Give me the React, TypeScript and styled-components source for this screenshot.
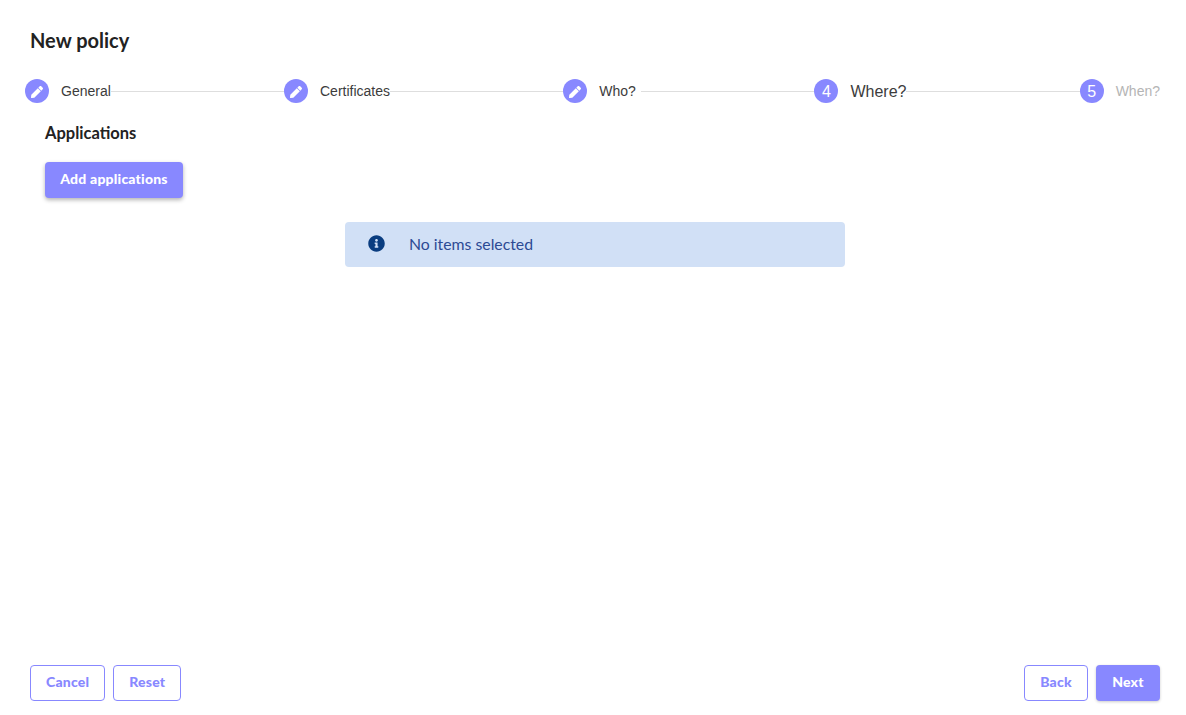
import React from 'react';
import styled, { createGlobalStyle } from 'styled-components';
import { FaPen, FaInfoCircle } from 'react-icons/fa';

const GlobalStyle = createGlobalStyle`
  html, body {
    margin: 0;
    padding: 0;
    background: #fff;
    font-family: Lato, "Open Sans", sans-serif;
  }
`;

const Page = styled.div`
  height: 715px;
  box-sizing: border-box;
  display: flex;
  flex-direction: column;
  padding: 28px 26px 14px 30px;
`;

const Title = styled.h1`
  margin: 0;
  font-size: 20px;
  line-height: 24px;
  font-weight: 700;
  color: #222;
`;

const Stepper = styled.div`
  display: flex;
  align-items: center;
  margin: 27px 0 0 -5px;
  height: 24px;
`;

const Step = styled.div`
  display: flex;
  align-items: center;
  gap: 12px;
`;

const Circle = styled.div`
  width: 24px;
  height: 24px;
  padding-top: 1px;
  box-sizing: border-box;
  border-radius: 50%;
  background: #8888ff;
  color: #fff;
  display: flex;
  align-items: center;
  justify-content: center;
  font-family: "Liberation Sans", sans-serif;
  font-size: 16px;
`;

const StepLabel = styled.span<{ $state: 'done' | 'active' | 'todo' }>`
  min-width: 42px;
  padding-top: ${p => (p.$state === 'active' ? '1px' : '0')};
  font-family: "Liberation Sans", sans-serif;
  font-size: ${p => (p.$state === 'active' ? '16px' : '14px')};
  color: ${p => (p.$state === 'todo' ? '#b5b5b5' : '#3c3c3c')};
`;

const Connector = styled.div`
  flex: 1;
  height: 1px;
  background: #dedede;
`;

const Section = styled.section`
  padding: 20px 0 0 15px;
`;

const SectionTitle = styled.h2`
  margin: 0;
  font-size: 16.5px;
  line-height: 20px;
  font-weight: 700;
  color: #222;
`;

const PrimaryButton = styled.button`
  height: 36px;
  min-width: 64px;
  padding: 0 16px 4px;
  border: none;
  border-radius: 4px;
  background: #8888ff;
  color: #fff;
  font-family: Lato, sans-serif;
  font-size: 14px;
  font-weight: 900;
  letter-spacing: 0.2px;
`;

const AddButton = styled(PrimaryButton)`
  display: block;
  width: 138px;
  margin-top: 19px;
  padding-left: 0;
  padding-right: 0;
  box-shadow: 0 2px 4px rgba(0, 0, 0, 0.3);
`;

const Notice = styled.div`
  width: 500px;
  height: 45px;
  box-sizing: border-box;
  margin: 24px 0 0 300px;
  padding: 0 23px 2px;
  display: flex;
  align-items: center;
  gap: 24px;
  border-radius: 4px;
  background: #d1e0f6;
  color: #2c4a94;
  font-size: 15.8px;
`;

const NoticeIcon = styled(FaInfoCircle)`
  color: #0a3d80;
  width: 17px;
  height: 17px;
`;

const Footer = styled.footer`
  margin-top: auto;
  display: flex;
  justify-content: space-between;
`;

const ButtonGroup = styled.div`
  display: flex;
  gap: 8px;
`;

const OutlineButton = styled.button`
  height: 36px;
  min-width: 64px;
  padding: 0 15px 4px;
  border: 1px solid #8888ff;
  border-radius: 4px;
  background: #fff;
  color: #8888ff;
  font-family: Lato, sans-serif;
  font-size: 14px;
  font-weight: 900;
  letter-spacing: 0.2px;
`;

const NextButton = styled(PrimaryButton)`
  box-shadow: 0 1px 3px rgba(0, 0, 0, 0.2);
`;

const steps = [
  { label: 'General', state: 'done' },
  { label: 'Certificates', state: 'done' },
  { label: 'Who?', state: 'done' },
  { label: 'Where?', state: 'active', num: 4 },
  { label: 'When?', state: 'todo', num: 5 },
] as const;

const App: React.FC = () => {
  return (
    <Page>
      <GlobalStyle />
      <Title>New policy</Title>
      <Stepper>
        {steps.map((step, i) => (
          <React.Fragment key={step.label}>
            {i > 0 && <Connector />}
            <Step>
              <Circle>{step.state === 'done' ? <FaPen size={12} /> : step.num}</Circle>
              <StepLabel $state={step.state}>{step.label}</StepLabel>
            </Step>
          </React.Fragment>
        ))}
      </Stepper>
      <Section>
        <SectionTitle>Applications</SectionTitle>
        <AddButton>Add applications</AddButton>
        <Notice>
          <NoticeIcon />
          No items selected
        </Notice>
      </Section>
      <Footer>
        <ButtonGroup>
          <OutlineButton>Cancel</OutlineButton>
          <OutlineButton>Reset</OutlineButton>
        </ButtonGroup>
        <ButtonGroup>
          <OutlineButton>Back</OutlineButton>
          <NextButton>Next</NextButton>
        </ButtonGroup>
      </Footer>
    </Page>
  );
};

export default App;
